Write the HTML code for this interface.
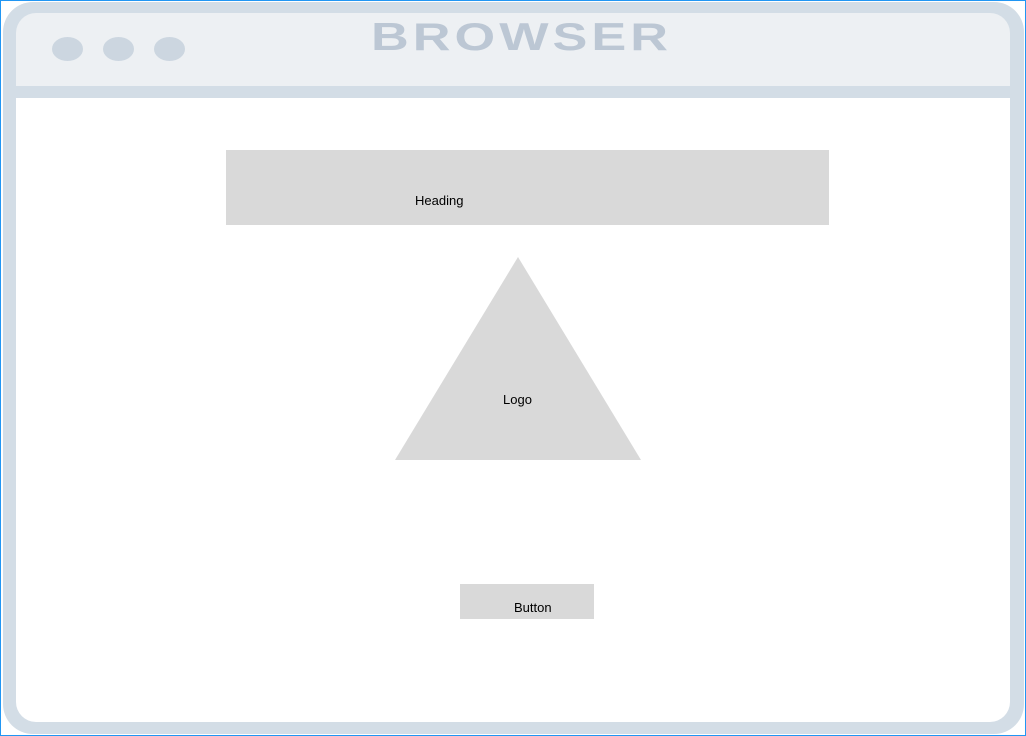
<!DOCTYPE html>
<html><head><style>
body{margin:0;width:1026px;height:736px;overflow:hidden;background:#fff;position:relative;font-family:"Liberation Sans",sans-serif}
.a{position:absolute}
</style></head><body>
<div class="a" style="left:0;top:0;width:1024px;height:734px;border:1px solid #2196f3"></div>
<div class="a" style="left:3px;top:2px;width:1021px;height:732px;background:#d3dde6;border-radius:30px"></div>
<div class="a" style="left:16px;top:13px;width:994px;height:73px;background:#edf0f3;border-radius:20px 20px 0 0"></div>
<div class="a" style="left:16px;top:98px;width:994px;height:624px;background:#fff;border-radius:0 0 20px 20px"></div>
<div class="a" style="left:52px;top:37px;width:31px;height:24px;border-radius:50%;background:#ccd6e0"></div>
<div class="a" style="left:103px;top:37px;width:31px;height:24px;border-radius:50%;background:#ccd6e0"></div>
<div class="a" style="left:154px;top:37px;width:31px;height:24px;border-radius:50%;background:#ccd6e0"></div>
<div class="a" style="left:371px;top:18px;font-size:39px;font-weight:bold;letter-spacing:3px;color:#bcc7d4;line-height:39px;transform:scaleX(1.34);transform-origin:0 0;white-space:nowrap">BROWSER</div>
<div class="a" style="left:226px;top:150px;width:603px;height:75px;background:#d9d9d9"></div>
<div class="a" style="left:415px;top:193px;font-size:13px;color:#000">Heading</div>
<svg class="a" style="left:0;top:0" width="1026" height="736"><polygon points="518,257 395,460 641,460" fill="#d9d9d9"/></svg>
<div class="a" style="left:503px;top:392px;font-size:13px;color:#000">Logo</div>
<div class="a" style="left:460px;top:584px;width:134px;height:35px;background:#d9d9d9"></div>
<div class="a" style="left:514px;top:600px;font-size:13px;color:#000">Button</div>
</body></html>
